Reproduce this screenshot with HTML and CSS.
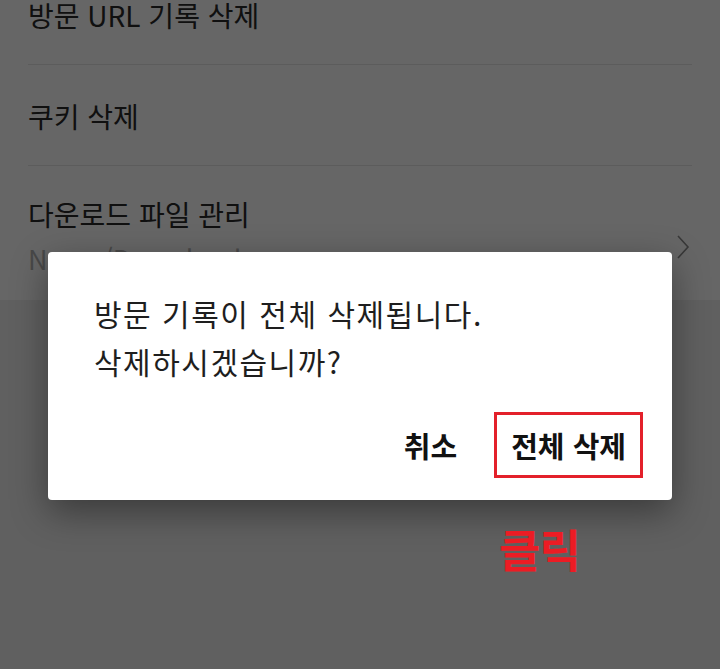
FILE: index.html
```html
<!DOCTYPE html>
<html lang="ko">
<head>
    <meta charset="UTF-8">
    <title>인터넷 사용 기록 삭제</title>
    <link rel="stylesheet" href="styles.css">
</head>
<body>
    <div class="screen">
        <ul class="settings">
            <li class="item">
                <div class="item-text">
                    <div class="item-title">방문 URL 기록 삭제</div>
                </div>
            </li>
            <li class="item">
                <div class="item-text">
                    <div class="item-title">쿠키 삭제</div>
                </div>
            </li>
            <li class="item item-last">
                <div class="item-text">
                    <div class="item-title">다운로드 파일 관리</div>
                    <div class="item-sub">Naver/Download</div>
                </div>
                <svg class="chevron" width="14" height="26" viewBox="0 0 14 26">
                    <polyline points="2,2 12,13 2,24" fill="none" stroke="#8c8c8c" stroke-width="1.6"/>
                </svg>
            </li>
        </ul>

        <div class="overlay">
            <div class="dialog">
                <p class="message">방문 기록이 전체 삭제됩니다.<br>삭제하시겠습니까?</p>
                <div class="actions">
                    <button class="btn">취소</button>
                    <button class="btn btn-marked">전체 삭제</button>
                </div>
            </div>
            <div class="hint">클릭</div>
        </div>
    </div>
</body>
</html>
```

FILE: styles.css
```css
body {
    margin: 0;
    background-color: #f0f0f0;
    font-family: "Noto Sans CJK KR", "Noto Sans", sans-serif;
    color: #333;
}

.screen {
    position: relative;
    width: 720px;
    height: 669px;
    overflow: hidden;
}

.settings {
    list-style: none;
    margin: -36px 0 0 0;
    padding: 0 28px;
    background-color: #fff;
}

.item {
    display: flex;
    align-items: center;
    padding: 33px 0 31px;
    border-bottom: 1px solid #e6e6e6;
}

.item-last {
    border-bottom: none;
    padding: 30px 0 0;
    height: 104px;
    align-items: flex-start;
}

.item-text {
    flex: 1;
}

.item-title {
    font-size: 28px;
    line-height: 36px;
    color: #2a2a2a;
}

.item-sub {
    margin-top: 10px;
    font-size: 27px;
    line-height: 34px;
    color: #b4b4b4;
}

.chevron {
    margin-top: 38px;
    margin-right: 2px;
}

.overlay {
    position: absolute;
    top: 0;
    left: 0;
    right: 0;
    bottom: 0;
    background-color: rgba(0, 0, 0, 0.6);
    display: flex;
    flex-direction: column;
    padding-top: 252px;
}

.dialog {
    margin: 0 48px;
    height: 248px;
    box-sizing: border-box;
    padding: 37px 29px 0 46px;
    background-color: #fff;
    border-radius: 4px;
    box-shadow: 0 12px 36px rgba(0, 0, 0, 0.4);
}

.message {
    margin: 0;
    font-size: 30px;
    line-height: 48px;
    letter-spacing: 1.5px;
    color: #1e1e1e;
}

.actions {
    display: flex;
    justify-content: flex-end;
    align-items: center;
    gap: 20px;
    margin-top: 27px;
}

.btn {
    font-family: "Noto Sans CJK KR", "Noto Sans", sans-serif;
    font-size: 29px;
    font-weight: bold;
    color: #111;
    background: none;
    border: 3px solid transparent;
    padding: 0 14px;
    height: 66px;
    line-height: 58px;
}

.btn-marked {
    border-color: #e3202a;
}

.hint {
    align-self: flex-start;
    margin: 22px 0 0 499px;
    font-size: 45px;
    font-weight: bold;
    line-height: 54px;
    letter-spacing: -1px;
    color: #ec1c24;
}
```
